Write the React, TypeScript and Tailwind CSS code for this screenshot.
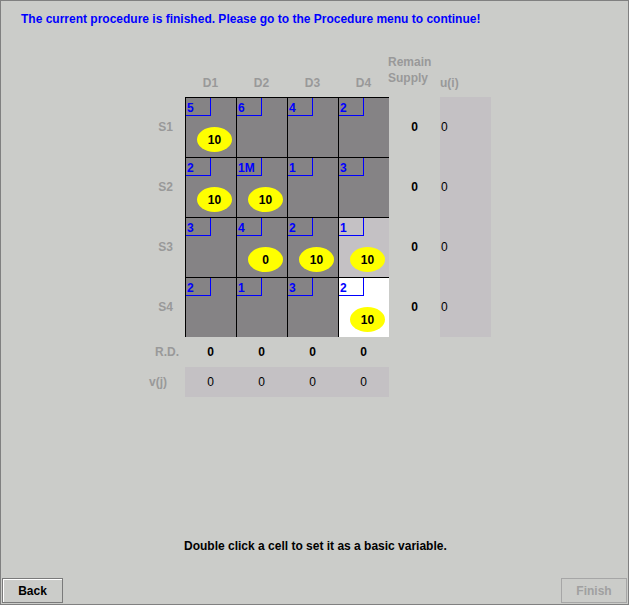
import React from 'react';

const costs = [
  ['5', '6', '4', '2'],
  ['2', '1M', '1', '3'],
  ['3', '4', '2', '1'],
  ['2', '1', '3', '2'],
];

const alloc: (string | null)[][] = [
  ['10', null, null, null],
  ['10', '10', null, null],
  [null, '0', '10', '10'],
  [null, null, null, '10'],
];

const cellBg = (r: number, c: number) => {
  if (r === 2 && c === 3) return 'bg-[#c4c1c4]';
  if (r === 3 && c === 3) return 'bg-white';
  return 'bg-[#858385]';
};

function Cell({ r, c }: { r: number; c: number }) {
  const val = alloc[r][c];
  return (
    <div className={`w-[51px] h-[60px] border-l border-t border-black flex flex-col ${cellBg(r, c)}`}>
      <div className="w-[25px] h-[18px] border-r border-b border-[#0000ff] pl-px pt-[4px] text-[12px] leading-[12px] font-bold text-[#0000ff]">
        {costs[r][c]}
      </div>
      {val !== null && (
        <div className="ml-[11px] mt-[11px] w-[35px] h-[25px] rounded-[50%] bg-[#ffff00] flex items-center justify-center text-[12px] font-bold text-black">
          {val}
        </div>
      )}
    </div>
  );
}

export default function App() {
  const rowLabels = ['S1', 'S2', 'S3', 'S4'];
  return (
    <div className="w-[629px] h-[605px] border border-[#808080] bg-[#cbccc9] flex flex-col font-['Liberation_Sans',Arial,sans-serif] text-[12px] leading-4 select-none">
      <div className="h-[49px] pl-[20px] pt-[10px] font-bold text-[#0000ff]">
        The current procedure is finished. Please go to the Procedure menu to continue!
      </div>

      <div className="ml-[139px] flex flex-col">
        {/* header */}
        <div className="flex h-[47px] font-bold text-[#999999]">
          <div className="w-[45px]" />
          {['D1', 'D2', 'D3', 'D4'].map(d => (
            <div key={d} className="w-[51px] flex items-end justify-center pb-[6px]">{d}</div>
          ))}
          <div className="w-[51px] flex items-end pb-[11px] -ml-px">
            <div>Remain<br />Supply</div>
          </div>
          <div className="w-[51px] flex items-end pb-[6px] pl-px">u(i)</div>
        </div>

        {/* rows */}
        {rowLabels.map((label, r) => (
          <div key={label} className="flex h-[60px]">
            <div className="w-[45px] flex items-center justify-end pr-[12px] font-bold text-[#999999]">{label}</div>
            {[0, 1, 2, 3].map(c => <Cell key={c} r={r} c={c} />)}
            <div className="w-[51px] flex items-center justify-center font-bold text-black">0</div>
            <div className="w-[51px] bg-[#c4c1c4] flex items-center pl-px text-black">0</div>
          </div>
        ))}

        {/* R.D. */}
        <div className="flex h-[30px]">
          <div className="w-[45px] flex items-center justify-end pr-[6px] font-bold text-[#999999]">R.D.</div>
          {[0, 1, 2, 3].map(c => (
            <div key={c} className="w-[51px] flex items-center justify-center font-bold text-black">0</div>
          ))}
        </div>

        {/* v(j) */}
        <div className="flex h-[30px]">
          <div className="w-[45px] flex items-center justify-end pr-[18px] font-bold text-[#999999]">v(j)</div>
          <div className="flex bg-[#c4c1c4]">
            {[0, 1, 2, 3].map(c => (
              <div key={c} className="w-[51px] flex items-center justify-center text-black">0</div>
            ))}
          </div>
        </div>
      </div>

      <div className="mt-auto flex flex-col">
        <div className="pl-[183px] mb-[24px] font-bold text-black">
          Double click a cell to set it as a basic variable.
        </div>
        <div className="flex justify-between px-px mb-px">
          <button className="w-[61px] h-[25px] border border-[#7a7a7a] shadow-[inset_1px_1px_0_#ffffff] bg-[#cbccc9] font-bold text-black text-[12px]">
            Back
          </button>
          <button disabled className="w-[66px] h-[25px] border border-[#a6a6a6] bg-[#cbccc9] font-bold text-[#a0a0a0] text-[12px]">
            Finish
          </button>
        </div>
      </div>
    </div>
  );
}
